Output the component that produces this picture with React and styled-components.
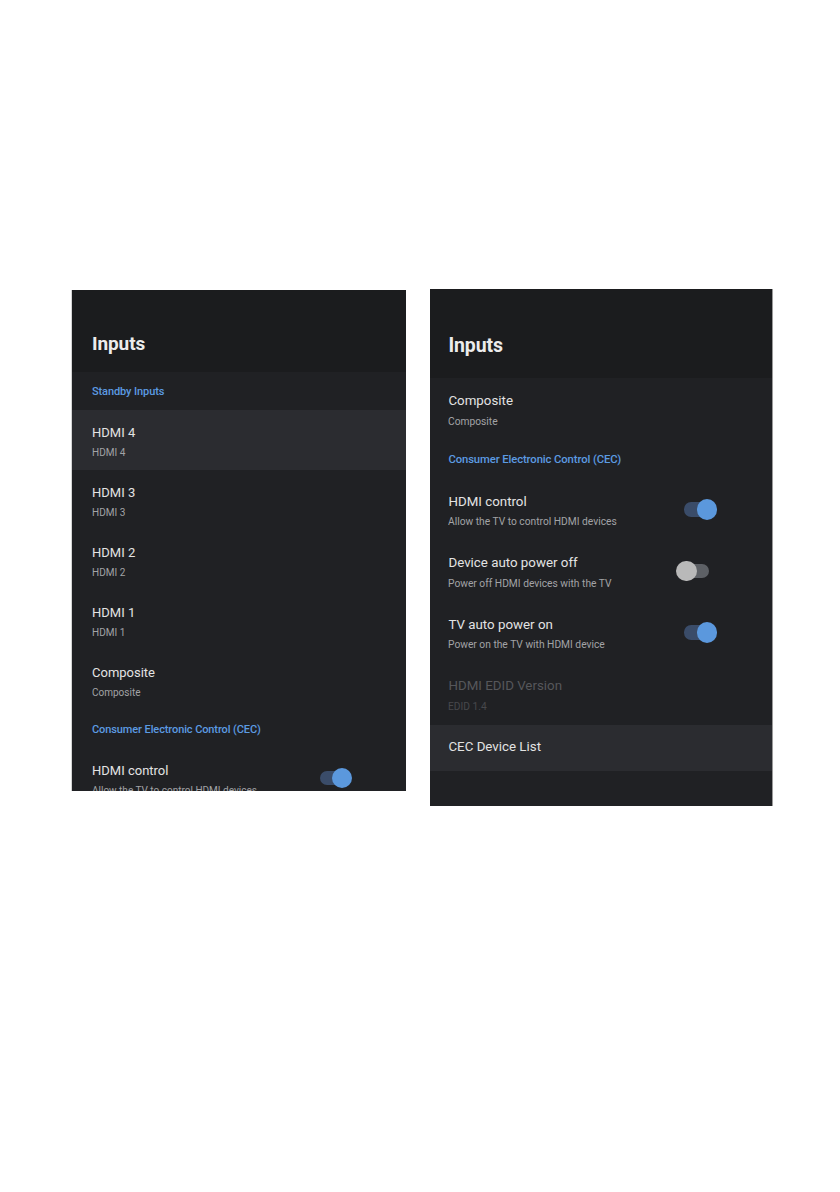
import React from 'react'
import styled, { createGlobalStyle } from 'styled-components'

const GlobalStyle = createGlobalStyle`
    html, body {
        margin: 0;
        padding: 0;
        background: #ffffff;
    }
    body {
        font-family: 'Roboto', 'Liberation Sans', sans-serif;
        -webkit-font-smoothing: antialiased;
    }
`

const leftItems = [
    { type: 'section', label: 'Standby Inputs' },
    { type: 'item', title: 'HDMI 4', sub: 'HDMI 4', active: true },
    { type: 'item', title: 'HDMI 3', sub: 'HDMI 3' },
    { type: 'item', title: 'HDMI 2', sub: 'HDMI 2' },
    { type: 'item', title: 'HDMI 1', sub: 'HDMI 1' },
    { type: 'item', title: 'Composite', sub: 'Composite' },
    { type: 'section', label: 'Consumer Electronic Control (CEC)' },
    { type: 'item', title: 'HDMI control', sub: 'Allow the TV to control HDMI devices', toggle: true, on: true },
]

const rightItems = [
    { type: 'item', title: 'Composite', sub: 'Composite' },
    { type: 'section', label: 'Consumer Electronic Control (CEC)' },
    { type: 'item', title: 'HDMI control', sub: 'Allow the TV to control HDMI devices', toggle: true, on: true },
    { type: 'item', title: 'Device auto power off', sub: 'Power off HDMI devices with the TV', toggle: true, on: false },
    { type: 'item', title: 'TV auto power on', sub: 'Power on the TV with HDMI device', toggle: true, on: true },
    { type: 'item', title: 'HDMI EDID Version', sub: 'EDID 1.4', disabled: true },
    { type: 'item', title: 'CEC Device List', active: true, short: true },
]

const Toggle = ({ on }) => (
    <SwitchBox>
        <SwitchTrack $on={on} />
        <SwitchKnob $on={on} />
    </SwitchBox>
)

const SettingsPanel = ({ items, headerHeight, titleTop, inset, ...rest }) => (
    <Panel $inset={inset} {...rest}>
        <Header $height={headerHeight} $top={titleTop}>
            <HeaderTitle>Inputs</HeaderTitle>
        </Header>
        {items.map((it, i) =>
            it.type === 'section' ? (
                <SectionLabel key={i}>{it.label}</SectionLabel>
            ) : (
                <Row key={i} $active={it.active} $short={it.short}>
                    <RowText>
                        <RowTitle $disabled={it.disabled}>{it.title}</RowTitle>
                        {it.sub && <RowSub $disabled={it.disabled}>{it.sub}</RowSub>}
                    </RowText>
                    {it.toggle && <Toggle on={it.on} />}
                </Row>
            )
        )}
    </Panel>
)

const App = () => {
    return (
        <>
            <GlobalStyle />
            <Stage>
                <SettingsPanel
                    items={leftItems}
                    headerHeight={82}
                    titleTop={42}
                    inset={20}
                    $height={501}
                    $offset={1}
                    $edge="left"
                />
                <SettingsPanel
                    items={rightItems}
                    headerHeight={87}
                    titleTop={44}
                    inset={18}
                    $height={504}
                    $zoom={1.025}
                    $edge="right"
                />
            </Stage>
        </>
    )
}

export default App

const Stage = styled.div`

    display: flex;
    flex-direction: row;
    align-items: flex-start;
    gap: 24px;

    padding: 289px 0 0 72px;
    width: 840px;
    height: 1192px;
    box-sizing: border-box;

`

const Panel = styled.div`

    --inset: ${(p) => p.$inset}px;

    width: 334px;
    height: ${(p) => p.$height}px;
    margin-top: ${(p) => p.$offset || 0}px;
    zoom: ${(p) => p.$zoom || 1};

    display: flex;
    flex-direction: column;
    flex-shrink: 0;
    overflow: hidden;

    background: #202124;
    box-shadow: ${(p) => (p.$edge === 'left' ? '-1px 0 0 #d4d4d4' : '1px 0 0 #9a9a9a')};

`

const Header = styled.div`

    height: ${(p) => p.$height}px;
    padding: ${(p) => p.$top}px var(--inset) 0;
    box-sizing: border-box;
    flex-shrink: 0;

    background: #1b1c1e;

`

const HeaderTitle = styled.h1`

    margin: 0;
    color: #ececec;
    font-size: 19px;
    font-weight: 700;
    line-height: 24px;
    letter-spacing: -0.1px;

`

const SectionLabel = styled.div`

    height: 38px;
    padding: 0 var(--inset);
    box-sizing: border-box;
    flex-shrink: 0;

    display: flex;
    align-items: center;

    color: #5c9be2;
    font-size: 11px;
    font-weight: 500;
    letter-spacing: -0.1px;

`

const Row = styled.div`

    height: ${(p) => (p.$short ? 45 : 60)}px;
    padding: ${(p) => (p.$short ? '0' : '13px')} 54px 0 var(--inset);
    box-sizing: border-box;
    flex-shrink: 0;

    display: flex;
    flex-direction: row;
    align-items: ${(p) => (p.$short ? 'center' : 'flex-start')};
    justify-content: space-between;
    position: relative;

    background: ${(p) => (p.$active ? '#2b2c30' : 'transparent')};

`

const RowText = styled.div`

    display: flex;
    flex-direction: column;
    align-items: flex-start;
    min-width: 0;

`

const RowTitle = styled.span`

    color: ${(p) => (p.$disabled ? '#56575b' : '#e3e3e3')};
    font-size: 13px;
    line-height: 20px;
    white-space: nowrap;

`

const RowSub = styled.span`

    display: inline-block;
    margin-top: 1px;
    color: ${(p) => (p.$disabled ? '#47484c' : '#a2a3a6')};
    font-size: 11.5px;
    line-height: 16px;
    white-space: nowrap;
    transform: scaleX(0.87);
    transform-origin: left center;

`

const SwitchBox = styled.div`

    width: 40px;
    height: 20px;
    position: absolute;
    right: 54px;
    top: 20px;

`

const SwitchTrack = styled.div`

    position: absolute;
    left: 8px;
    top: 3px;
    width: 24px;
    height: 14px;
    border-radius: 7px;
    background: ${(p) => (p.$on ? '#3a4c69' : '#5d6065')};

`

const SwitchKnob = styled.div`

    position: absolute;
    top: 0;
    left: ${(p) => (p.$on ? 20 : 0)}px;
    width: 20px;
    height: 20px;
    border-radius: 50%;
    background: ${(p) => (p.$on ? '#5b98dd' : '#b9b9b9')};

`
